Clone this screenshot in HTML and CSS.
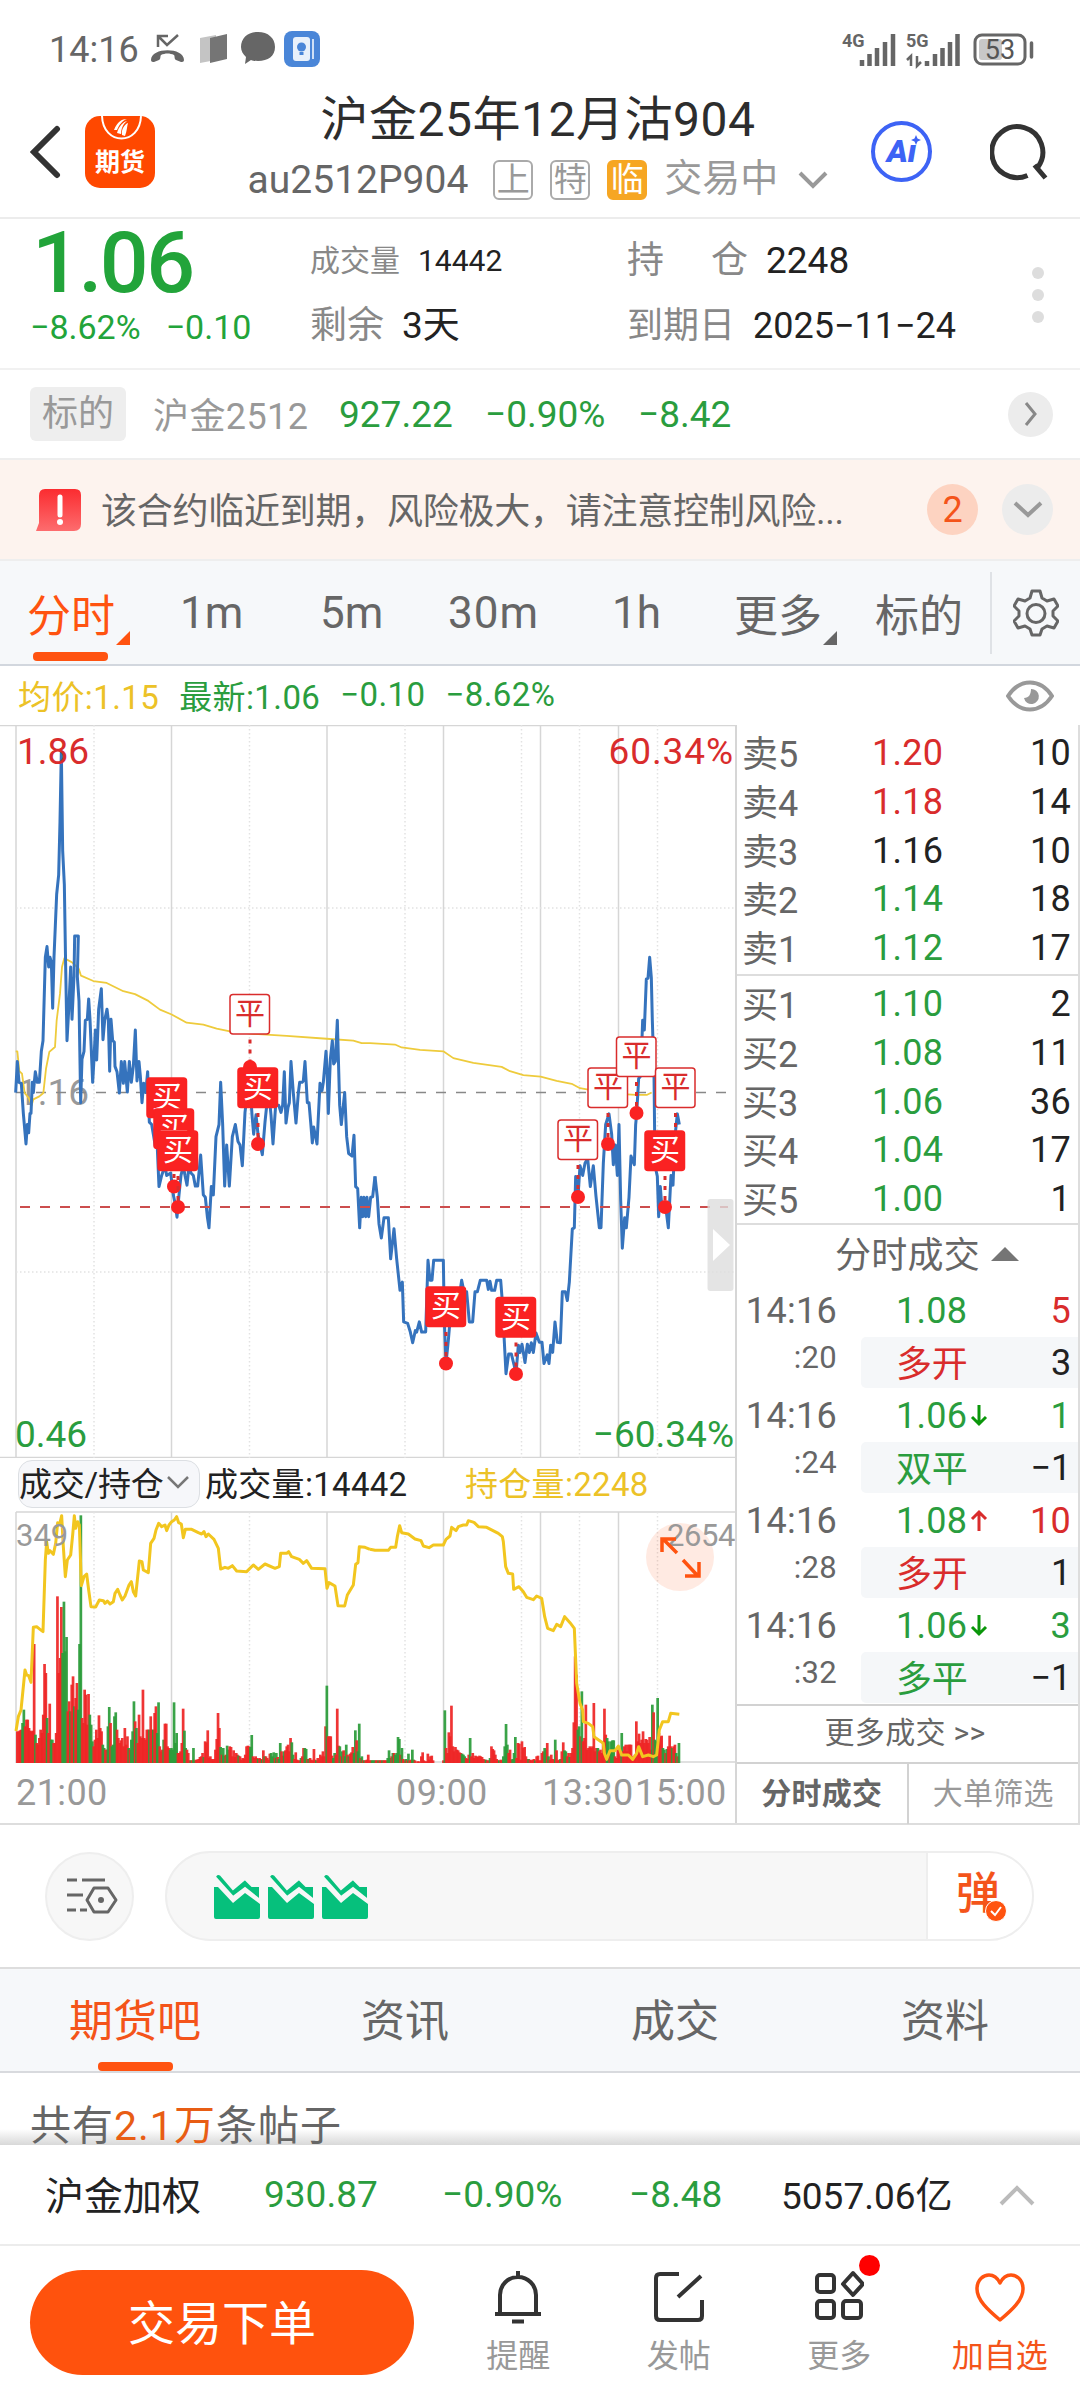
FILE: index.html
```html
<!DOCTYPE html>
<html lang="zh-CN">
<head>
    <meta charset="UTF-8">
    <meta name="viewport" content="width=device-width, initial-scale=1.0">
    <link rel="stylesheet" href="styles.css">
    <title>沪金25年12月沽904</title>
</head>
<body>
    <div class="container">
        <!-- Status bar -->
        <div class="status-bar">
            <span class="clock">14:16</span>
            <svg class="status-icons" width="170" height="40" viewBox="0 0 170 40">
                <path d="M8 17V6h10M8 6l9 9L28 5" fill="none" stroke="#666" stroke-width="2.5"/>
                <path d="M1 30c0-13 33-13 33 0 0 2-2 2-3 2l-5-2c-2-1-1-4-2-5-4-2-9-2-13 0-1 1 0 4-2 5l-5 2c-1 0-3 0-3-2z" fill="#666"/>
                <path d="M50 8l16-3v25l-16 3z" fill="#c4c4c4"/>
                <path d="M60 8l17-4v25l-17 4z" fill="#757575"/>
                <path d="M108 2c10 0 17 6 17 15s-7 14-17 14c-3 0-5 0-7-1l-6 4 1-7c-3-3-5-6-5-10 0-9 7-15 17-15z" fill="#666"/>
                <rect x="134" y="1" width="36" height="36" rx="8" fill="#4a86d8"/>
                <rect x="143" y="7" width="17" height="24" rx="3" fill="#e9f1fb"/>
                <path d="M163 9v20" stroke="#cfe0f6" stroke-width="2"/>
                <circle cx="151.500" cy="17" r="4.500" fill="#4a86d8"/>
                <path d="M149.500 22h4v3h-4z" fill="#4a86d8"/>
            </svg>
            <svg class="status-right" width="192" height="40" viewBox="0 0 192 40">
                <text x="0" y="17" class="net">4G</text>
                <path d="M20 36v-6M27.500 36V24M35 36V18M43 36V12M51 36V4" stroke="#666" stroke-width="4.500"/>
                <text x="64" y="17" class="net">5G</text>
                <path d="M69 36V26l-4 4M75 26v10l4-4" stroke="#666" stroke-width="2.500" fill="none"/>
                <path d="M85 36v-5M93 36V24M100.500 36V18M108 36V12M115.500 36V4" stroke="#666" stroke-width="4.500"/>
                <rect x="133" y="5" width="50" height="29" rx="7" fill="none" stroke="#666" stroke-width="3"/>
                <rect x="137" y="9" width="23" height="21" rx="3" fill="#c8c8c8"/>
                <text x="158" y="29" text-anchor="middle" class="battery">53</text>
                <path d="M189.500 13v14" stroke="#666" stroke-width="3.500" stroke-linecap="round"/>
            </svg>
        </div>

        <!-- Header -->
        <div class="header">
            <svg width="32" height="54" viewBox="0 0 32 54"><path d="M27 4L4 27l23 23" fill="none" stroke="#333" stroke-width="6" stroke-linecap="round"/></svg>
            <div class="logo">
                <svg width="72" height="28" viewBox="0 0 72 28">
                    <path d="M17 0c1 30 38 30 39 0" fill="none" stroke="#fff" stroke-width="2"/>
                    <path d="M29 14c3-8 8-11 13-11-5 2-8 6-10 11zM32 17c2-7 6-11 10-12-4 3-6 8-6 13zM37 19c-1-6 3-11 6-12-1 3-1 8-3 13z" fill="#fff"/>
                </svg>
                <span>期货</span>
            </div>
            <div class="title-box">
                <h1>沪金25年12月沽904</h1>
                <div class="sub-title">
                    <span>au2512P904</span>
                    <i class="tag">上</i><i class="tag">特</i><i class="tag tag-near">临</i>
                    <span class="state">交易中</span>
                    <svg width="30" height="18" viewBox="0 0 30 18"><path d="M2 2l13 13L28 2" fill="none" stroke="#999" stroke-width="4"/></svg>
                </div>
            </div>
            <div class="ai-button">Ai<svg width="10" height="10" viewBox="0 0 10 10"><path d="M5 0l1.500 3.500L10 5 6.500 6.500 5 10 3.500 6.500 0 5l3.500-1.500z" fill="#3d63f5"/></svg></div>
            <svg class="search" width="60" height="60" viewBox="0 0 60 60"><path d="M37.500 53.500A25.500 25.500 0 1 1 48 45M44.500 43l11 13" fill="none" stroke="#333" stroke-width="5"/></svg>
        </div>

        <!-- Quote -->
        <div class="quote">
            <div class="quote-main">
                <div class="price">1.06</div>
                <div class="change"><span>−8.62%</span><span>−0.10</span></div>
            </div>
            <div class="quote-col">
                <div class="small"><label>成交量</label>14442</div>
                <div><label>剩余</label>3天</div>
            </div>
            <div class="quote-col">
                <div class="wide"><label><span>持</span><span>仓</span></label>2248</div>
                <div class="date"><label>到期日</label>2025−11−24</div>
            </div>
            <div class="dots"><i></i><i></i><i></i></div>
        </div>

        <div class="underlying">
            <span class="badge">标的</span>
            <span class="name">沪金2512</span>
            <span class="u-price">927.22</span>
            <span class="u-rate">−0.90%</span>
            <span>−8.42</span>
            <div class="round small-round"><svg width="14" height="26" viewBox="0 0 14 26"><path d="M2 2l9 11-9 11" fill="none" stroke="#888" stroke-width="3"/></svg></div>
        </div>

        <div class="warning">
            <svg width="46" height="44" viewBox="0 0 46 44">
                <defs><linearGradient id="alert" x2="0" y2="1"><stop offset="0" stop-color="#fb2c30"/><stop offset="1" stop-color="#fd6c6e"/></linearGradient></defs>
                <path d="M9 1h30q6 0 6 6v29q0 7-7 7H0l3-8V8q0-7 6-7z" fill="url(#alert)"/>
                <path d="M24 9v18" stroke="#fff" stroke-width="5" stroke-linecap="round"/><circle cx="24" cy="34" r="3" fill="#fff"/>
            </svg>
            <p>该合约临近到期，风险极大，请注意控制风险...</p>
            <div class="round count">2</div>
            <div class="round"><svg width="30" height="18" viewBox="0 0 30 18"><path d="M2 2l13 12L28 2" fill="none" stroke="#999" stroke-width="4"/></svg></div>
        </div>

        <!-- Period tabs -->
        <div class="periods">
            <a class="active has-menu">分时</a>
            <a>1m</a>
            <a>5m</a>
            <a>30m</a>
            <a>1h</a>
            <a class="has-menu">更多</a>
            <a>标的</a>
            <div class="settings">
                <svg width="46" height="48" viewBox="0 0 46 48">
                    <path d="M19 2h8l2 7 5 3 7-2 4 7-5 5v5l5 5-4 7-7-2-5 3-2 6h-8l-2-6-5-3-7 2-4-7 5-5v-5l-5-5 4-7 7 2 5-3z" fill="none" stroke="#666" stroke-width="3" stroke-linejoin="round"/>
                    <circle cx="23" cy="24.500" r="9" fill="none" stroke="#666" stroke-width="3"/>
                </svg>
            </div>
        </div>

        <div class="legend">
            <span class="yellow">均价:1.15</span>
            <span>最新:1.06</span>
            <span>−0.10</span>
            <span>−8.62%</span>
            <svg width="48" height="32" viewBox="0 0 48 32"><path d="M2 16C14-2 34-2 46 16 34 34 14 34 2 16z" fill="none" stroke="#999" stroke-width="4"/><path d="M25 9a7.500 7.500 0 1 1-7 9c5 0 7-4 7-9z" fill="#999"/></svg>
        </div>

        <div class="board">
            <div class="charts">
                <!-- Price chart -->
                <svg class="price-chart" width="735" height="733" viewBox="0 0 735 733">
                    <g class="grid">
                        <path d="M0 .5H735M0 732.500H735M16 0V733M171.500 0V733M327 0V733M443.500 0V733M540.500 0V733M618.500 0V733"/>
                        <path class="dotted" d="M94 0V733M249.500 0V733M405 0V733M521.500 0V733M579.500 0V733M657.500 0V733M16 183H735M16 547H735"/>
                    </g>
                    <text x="17" y="380" class="gray">1.16</text>
                    <path d="M16 367.500H728" class="base-line"/>
                    <g transform="translate(0 -15) scale(.33333 .48485)">
                        <polyline class="avg" points="47,704 52,704 58,745 66,750 74,790 86,800 95,815 100,803 118,797 130,790 138,740 148,705 165,695 170,640 180,585 186,530 193,512 215,520 236,533 243,548 280,559 320,563 370,580 405,586 445,600 480,618 515,628 560,645 610,649 650,657 690,663 760,668 860,672 980,678 1060,682 1085,687 1110,687 1185,690 1205,696 1260,701 1330,704 1360,718 1420,728 1505,736 1530,745 1570,753 1622,756 1670,765 1715,771 1740,780 1765,783 1810,790 1910,794 1940,794 1955,789"/>
                        <!-- night session -->
                        <polyline class="line" points="47,789 52,725 57,768 64,770 70,832 78,895 82,855 86,872 90,832 93,832 97,768 100,789 106,746 112,768 118,768 124,704 129,682 136,510 141,488 146,530 150,510 154,520 158,615 162,510 166,445 170,380 176,340 180,230 184,85 188,290 193,360 197,530 201,682 206,620 212,530 216,638 222,550 224,466 235,466 232,550 237,600 242,810 246,720 252,704 256,640 262,638 266,596 270,638 278,768 282,720 286,660 290,722 296,617 304,575 309,680 314,640 321,617 325,640 329,745 333,638 338,682 343,685 345,735 351,746 358,790 364,725 370,770 374,725 382,788 388,725 394,768 400,735 406,660 411,765 417,725 421,755 426,810 431,770 437,789 443,746 448,850 455,855 460,875 466,900 472,905 477,983 485,960 495,940 500,960 512,955 520,1000 526,1020 531,1046 537,1000 543,960 550,940 555,960 561,980 567,940 573,955 580,960 586,982 593,982 602,918 610,1000 616,1005 622,1045 627,1068 634,983 640,1000 648,880 657,855 662,768 668,855 674,982 680,897 688,982 697,880 706,855 714,890 720,897 727,940 735,830 742,790 750,770 756,835 761,875 768,835 774,875 780,895 787,917 795,850 801,810 808,800 813,835 819,895 827,815 836,815 843,830 848,815 853,746 858,852 864,820 868,810 873,725 880,790 888,852 895,790 899,768 906,768 910,765 915,725 922,810 927,810 932,850 937,893 941,860 951,895 960,770 966,785 970,768 978,704 981,740 985,832 991,720 997,682 1001,730 1006,725 1012,640 1019,815 1024,855 1034,789 1040,880 1046,915 1056,920 1062,877 1067,983 1073,987 1079,1068 1084,1005 1088,1045 1092,1005 1097,1045 1101,1005 1106,1045 1112,1005 1118,1004 1125,962"/>
                        <!-- day session -->
                        <polyline class="line" transform="translate(1110 0)" points="15,962 22,1005 27,1060 34,1089 42,1047 55,1047 62,1132 72,1070 80,1132 90,1197 97,1180 101,1262 113,1265 121,1283 128,1305 136,1280 140,1283 148,1262 155,1283 167,1283 170,1220 174,1135 180,1176 186,1176 191,1135 220,1135 223,1260 228,1348 235,1300 240,1260 250,1220 260,1215 270,1200 275,1176 282,1200 290,1200 298,1262 308,1262 315,1200 322,1200 331,1176 350,1176 355,1195 360,1178 365,1197 374,1197 380,1176 392,1176 397,1220 402,1290 408,1369 416,1328 424,1328 432,1350 438,1370 445,1310 450,1325 456,1308 465,1346 472,1308 478,1325 484,1305 490,1325 498,1285 508,1304 516,1304 522,1348 532,1330 537,1348 542,1310 548,1325 555,1262 562,1304 571,1305 577,1200 586,1200 592,1218 598,1180 607,1070 613,1068 617,962 624,1005 630,940 638,960 645,935 653,925 661,983 670,940 678,1003 688,1068 693,1068 700,935 707,855 717,833 725,875 730,938 736,897 742,960 747,855 752,1010 757,1110 764,1047 769,1068 777,1005 783,920 793,938 797,855 800,833 806,760 812,755 818,640 823,660 829,555 834,553 839,510 844,552 847,640 852,750 855,940 862,962 866,1045 871,983 876,1030 884,1026 888,1030 895,1068 903,960 909,980 915,880 922,833 928,855"/>
                    </g>
                    <path d="M20 482H728" class="cost-line"/>
                    <g id="marks"></g>
                    <text x="17" y="39" class="red">1.86</text>
                    <text x="734" y="39" class="red percent" text-anchor="end">60.34%</text>
                    <text x="15" y="722" class="green">0.46</text>
                    <text x="734" y="722" class="green" text-anchor="end">−60.34%</text>
                    <rect x="707.500" y="474" width="26" height="92" rx="3" fill="#ddd" fill-opacity=".8"/>
                    <path d="M713 504v32l17-16z" fill="#fff"/>
                </svg>

                <div class="volume-head">
                    <span class="select">成交/持仓<svg width="24" height="16" viewBox="0 0 24 16"><path d="M2 3l10 10L22 3" fill="none" stroke="#777" stroke-width="2.500"/></svg></span>
                    <span class="volume">成交量:14442</span>
                    <span class="hold yellow">持仓量:2248</span>
                </div>

                <!-- Volume chart -->
                <svg class="volume-chart" width="735" height="253" viewBox="0 0 735 253">
                    <g class="grid">
                        <path d="M16 2H735M16 252H735M16 2V253M171.500 2V253M327 2V253M443.500 2V253M540.500 2V253M618.500 2V253"/>
                        <path class="dotted" d="M94 2V253M249.500 2V253M405 2V253M521.500 2V253M579.500 2V253M657.500 2V253"/>
                    </g>
                    <g id="bars"></g>
                    <g transform="translate(10 0) scale(.33333)">
                        <polyline class="open-interest" points="18,663 25,620 33,600 45,480 50,495 56,497 63,517 70,352 80,350 90,358 99,365 106,150 110,95 115,130 120,122 130,133 137,100 143,38 149,42 155,17 160,110 166,200 172,150 182,135 188,75 193,17 197,55 203,35 208,45 214,227 222,200 230,192 236,240 243,290 257,291 268,270 280,272 285,280 292,273 300,282 310,275 315,250 323,238 330,255 337,270 345,258 357,225 364,215 370,245 377,258 388,153 396,155 400,180 415,188 422,100 432,85 438,60 446,40 455,50 465,45 470,62 477,45 485,35 493,30 500,20 506,38 514,42 520,83 526,58 545,58 565,68 575,72 582,65 588,80 595,72 612,88 625,115 632,177 645,172 655,175 667,167 680,183 710,185 730,165 745,178 765,162 795,175 808,170 812,130 830,130 836,125 845,140 868,148 880,160 890,152 905,175 945,176 951,235 957,218 975,228 984,287 1004,288 1012,255 1030,225 1037,163 1044,158 1048,110 1065,112 1080,118"/>
                        <polyline class="open-interest" transform="translate(1080 0)" points="0,118 15,121 55,121 62,112 77,112 82,80 89,47 95,68 115,72 135,87 153,92 160,108 177,113 190,105 220,105 228,88 240,78 245,52 258,62 265,50 280,45 290,45 295,32 312,37 325,50 350,52 385,70 397,80 400,95 407,170 415,190 428,192 431,238 447,230 460,245 470,262 490,269 500,258 515,265 524,320 533,355 550,362 560,343 572,350 584,320 600,338 613,355 620,520 630,580 638,600 640,635 655,640 668,650 672,680 700,700 703,730 710,748 720,722 735,722 745,708 755,735 775,735 788,748 800,730 806,710 818,740 835,735 850,740 860,735 868,660 878,635 895,635 902,610 928,613"/>
                    </g>
                    <circle cx="680" cy="47" r="34" fill="#ff5310" fill-opacity=".12"/>
                    <text x="16" y="36" class="gray axis">349</text>
                    <text x="735" y="36" class="gray axis wide-axis" text-anchor="end">2654</text>
                    <path d="M677 43l-14-14M662 42V29h14M683 50l14 15M699 52v14h-14" fill="none" stroke="#ff5310" stroke-width="3.500"/>
                </svg>

                <div class="times"><span>21:00</span><span>09:00</span><span>13:30</span><span>15:00</span></div>
            </div>

            <!-- Order book -->
            <div class="book">
                <div class="levels">
                    <div><label>卖5</label><b class="red">1.20</b><em>10</em></div>
                    <div><label>卖4</label><b class="red">1.18</b><em>14</em></div>
                    <div><label>卖3</label><b>1.16</b><em>10</em></div>
                    <div><label>卖2</label><b class="green">1.14</b><em>18</em></div>
                    <div><label>卖1</label><b class="green">1.12</b><em>17</em></div>
                </div>
                <div class="levels">
                    <div><label>买1</label><b class="green">1.10</b><em>2</em></div>
                    <div><label>买2</label><b class="green">1.08</b><em>11</em></div>
                    <div><label>买3</label><b class="green">1.06</b><em>36</em></div>
                    <div><label>买4</label><b class="green">1.04</b><em>17</em></div>
                    <div><label>买5</label><b class="green">1.00</b><em>1</em></div>
                </div>
                <div class="trades-title">分时成交<i></i></div>
                <div class="trade">
                    <div class="time">14:16<small>:20</small></div>
                    <div class="deal"><p class="green">1.08<em class="red">5</em></p><p class="kind red">多开<em>3</em></p></div>
                </div>
                <div class="trade">
                    <div class="time">14:16<small>:24</small></div>
                    <div class="deal"><p class="green">1.06<svg width="18" height="24" viewBox="0 0 18 24"><path d="M9 1v19M2 13l7 7 7-7" fill="none" stroke="#0a960a" stroke-width="3"/></svg><em class="green">1</em></p><p class="kind green">双平<em>−1</em></p></div>
                </div>
                <div class="trade">
                    <div class="time">14:16<small>:28</small></div>
                    <div class="deal"><p class="green">1.08<svg width="18" height="24" viewBox="0 0 18 24"><path d="M9 22V3M2 10l7-7 7 7" fill="none" stroke="#d92c2c" stroke-width="3"/></svg><em class="red">10</em></p><p class="kind red">多开<em>1</em></p></div>
                </div>
                <div class="trade">
                    <div class="time">14:16<small>:32</small></div>
                    <div class="deal"><p class="green">1.06<svg width="18" height="24" viewBox="0 0 18 24"><path d="M9 1v19M2 13l7 7 7-7" fill="none" stroke="#0a960a" stroke-width="3"/></svg><em class="green">3</em></p><p class="kind green">多平<em>−1</em></p></div>
                </div>
                <div class="more-trades">更多成交 &gt;&gt;</div>
                <div class="book-tabs"><span class="active">分时成交</span><span>大单筛选</span></div>
            </div>
        </div>

        <!-- Comment bar -->
        <div class="comment-bar">
            <div class="filter">
                <svg width="52" height="40" viewBox="0 0 52 40">
                    <path d="M1 4h10M16 4h23M1 19h16M1 34h9M14 34h7" stroke="#666" stroke-width="3"/>
                    <path d="M28 12h14l8 12-8 12H28l-7-12z" fill="none" stroke="#666" stroke-width="3" stroke-linejoin="round"/><circle cx="35" cy="24" r="3" fill="#666"/>
                </svg>
            </div>
            <div class="input">
                <svg class="fall" width="46" height="46" viewBox="0 0 46 46"><path d="M0 44V14h4l15 16 12-10 15 11v13q0 2-2 2H2q-2 0-2-2z"/><path d="M1 4Q3-1 7 2l12 14L31 6l7 7 8 0v14L31 15 19 24z"/></svg>
                <svg class="fall" width="46" height="46" viewBox="0 0 46 46"><path d="M0 44V14h4l15 16 12-10 15 11v13q0 2-2 2H2q-2 0-2-2z"/><path d="M1 4Q3-1 7 2l12 14L31 6l7 7 8 0v14L31 15 19 24z"/></svg>
                <svg class="fall" width="46" height="46" viewBox="0 0 46 46"><path d="M0 44V14h4l15 16 12-10 15 11v13q0 2-2 2H2q-2 0-2-2z"/><path d="M1 4Q3-1 7 2l12 14L31 6l7 7 8 0v14L31 15 19 24z"/></svg>
                <div class="danmu">弹<svg width="22" height="22" viewBox="0 0 22 22"><circle cx="11" cy="11" r="10.500" fill="#ff5310" stroke="#fff"/><path d="M6 11l4 4 6-8" fill="none" stroke="#fff" stroke-width="2"/></svg></div>
            </div>
        </div>

        <div class="page-tabs">
            <a class="active">期货吧</a><a>资讯</a><a>成交</a><a>资料</a>
        </div>

        <div class="posts">共有<span>2.1万</span>条帖子</div>

        <!-- Index ticker -->
        <div class="ticker">
            <span class="t-name">沪金加权</span>
            <span class="t-price">930.87</span>
            <span class="t-rate">−0.90%</span>
            <span class="t-diff">−8.48</span>
            <span class="t-total">5057.06亿</span>
            <svg width="36" height="22" viewBox="0 0 36 22"><path d="M2 20L18 4l16 16" fill="none" stroke="#bbb" stroke-width="4"/></svg>
        </div>

        <div class="bottom-bar">
            <button>交易下单</button>
            <a>
                <svg width="50" height="54" viewBox="0 0 50 54"><path d="M25 1v6M7 44V25a18 18 0 0 1 36 0v19M2 44h46M19 51.500h12" fill="none" stroke="#333" stroke-width="4"/></svg>
                提醒
            </a>
            <a>
                <svg width="50" height="54" viewBox="0 0 50 54"><path d="M25 4H6q-4 0-4 4v38q0 4 4 4h38q4 0 4-4V30M24 27L47 6" fill="none" stroke="#333" stroke-width="4"/></svg>
                发帖
            </a>
            <a>
                <svg width="50" height="54" viewBox="0 0 50 54"><g fill="none" stroke="#333" stroke-width="4"><rect x="3" y="5" width="17" height="17" rx="3"/><rect x="3" y="31" width="17" height="17" rx="3"/><rect x="29" y="31" width="18" height="17" rx="3"/><path d="M39 3l10 11-10 11-10-11z" stroke-linejoin="round"/></g></svg>
                更多
                <i class="dot"></i>
            </a>
            <a class="favorite">
                <svg width="54" height="54" viewBox="0 0 54 54"><path d="M27 50C15 40 4 30 4 19 4 9 11 5 16 5c6 0 9 4 11 8 2-4 5-8 11-8 5 0 12 4 12 14 0 11-11 21-23 31z" fill="none" stroke="#ff5310" stroke-width="3.500" stroke-linejoin="round"/></svg>
                加自选
            </a>
        </div>
    </div>
    <script src="script.js"></script>
</body>
</html>
```

FILE: styles.css
```css
body {
    font-family: Roboto, "Noto Sans CJK SC", sans-serif;
    margin: 0;
    padding: 0;
    background: #fff;
    color: #222;
    font-size: 36px;
}

* {
    box-sizing: border-box;
}

i, em {
    font-style: normal;
}

p, h1 {
    margin: 0;
    font-weight: normal;
}

b {
    font-weight: normal;
}

.container {
    width: 1080px;
    height: 2400px;
    overflow: hidden;
    display: flex;
    flex-direction: column;
}

.container > div {
    flex-shrink: 0;
}

.red { color: #d92c2c; fill: #d92c2c; }
.green { color: #2a9d3e; fill: #2a9d3e; }
.gray { color: #999; fill: #999; }
.yellow { color: #ecc227; }

/* status bar */
.status-bar {
    height: 100px;
    display: flex;
    align-items: center;
    padding: 0 46px 0 49px;
}

.clock {
    width: 101px;
    font-size: 36px;
    color: #666;
}

.status-right {
    margin-left: auto;
}

.net {
    font-size: 18px;
    font-weight: bold;
    fill: #666;
}

.battery {
    font-size: 27px;
    fill: #555;
}

/* header */
.header {
    height: 119px;
    border-bottom: 2px solid #ececec;
    display: flex;
    align-items: center;
    padding: 0 30px 14px;
}

.header > svg {
    flex-shrink: 0;
}

.logo {
    width: 72px;
    height: 72px;
    margin-left: 23px;
    border-radius: 15px;
    background: #ff4800;
    color: #fff;
    font-size: 25px;
    line-height: 30px;
    font-weight: bold;
    text-align: center;
    overflow: hidden;
}

.logo svg {
    display: block;
}

.logo span {
    display: block;
    margin-top: 4px;
}

.title-box {
    width: 600px;
    margin: 0 33px 0 83px;
    text-align: center;
    flex-shrink: 0;
}

.title-box h1 {
    font-size: 48px;
    line-height: 60px;
    letter-spacing: .5px;
    color: #2d2d2d;
    margin-top: -4px;
}

.sub-title {
    display: flex;
    align-items: center;
    justify-content: center;
    font-size: 39px;
    line-height: 60px;
    color: #666;
}

.tag {
    width: 40px;
    height: 40px;
    margin-left: 16px;
    border: 2px solid #aaa;
    border-radius: 6px;
    font-size: 33px;
    line-height: 35px;
    color: #999;
}

.tag + .tag {
    margin-left: 17px;
}

.sub-title span + .tag {
    margin-left: 25px;
}

.tag-near {
    background: #f6a623;
    border-color: #f6a623;
    color: #fff;
}

.state {
    margin: 0 20px 0 17px;
    font-size: 38px;
    line-height: 54px;
    padding-bottom: 4px;
    color: #999;
}

.ai-button {
    width: 61px;
    height: 61px;
    flex-shrink: 0;
    border: 4px solid #3d63f5;
    border-radius: 50%;
    color: #3d63f5;
    font-size: 32px;
    line-height: 53px;
    font-weight: 900;
    font-style: italic;
    text-align: center;
    position: relative;
}

.ai-button svg {
    position: absolute;
    right: 7px;
    top: 10px;
    background: #fff;
}

.search {
    margin-left: 58px;
}

/* quote */
.quote {
    height: 151px;
    border-bottom: 2px solid #f1f1f1;
    display: flex;
    padding-left: 30px;
}

.quote-main {
    width: 280px;
    color: #22a43a;
}

.price {
    font-size: 86px;
    line-height: 88px;
    font-weight: 500;
    padding-left: 2px;
    letter-spacing: -2.5px;
    height: 84px;
}

.change {
    display: flex;
    gap: 25px;
    font-size: 34px;
    line-height: 48px;
}

.quote-col {
    width: 317px;
    display: flex;
    flex-direction: column;
    gap: 17px;
    padding-top: 18px;
    white-space: nowrap;
}

.quote-col div {
    display: flex;
    align-items: center;
    font-size: 37px;
    line-height: 48px;
}

.quote-col label {
    color: #888;
    margin-right: 18px;
}

.quote-col .small {
    font-size: 30px;
}

.wide label {
    width: 121px;
    display: flex;
    justify-content: space-between;
}

.quote-col .date {
    font-size: 36px;
}

.dots {
    margin: 48px 0 0 88px;
    display: flex;
    flex-direction: column;
    gap: 10px;
}

.dots i {
    width: 12px;
    height: 12px;
    border-radius: 50%;
    background: #ddd;
}

.underlying {
    height: 90px;
    border-bottom: 2px solid #eee;
    display: flex;
    align-items: center;
    padding: 0 27px 0 30px;
    font-size: 37px;
    color: #2a9d3e;
}

.badge {
    width: 96px;
    height: 54px;
    line-height: 54px;
    border-radius: 6px;
    background: #eee;
    color: #999;
    font-size: 36px;
    text-align: center;
}

.name {
    width: 186px;
    margin: -2px 0 0 27px;
    font-size: 36px;
    letter-spacing: .4px;
    color: #999;
}

.u-price { width: 146px; }
.u-rate { width: 153px; }

.round {
    width: 51px;
    height: 51px;
    border-radius: 50%;
    background: #ececec;
    display: flex;
    align-items: center;
    justify-content: center;
}

.small-round {
    width: 45px;
    height: 45px;
    margin-left: auto;
}

.warning {
    height: 101px;
    background: #fdf3ee;
    border-bottom: 2px solid #eee;
    display: flex;
    align-items: center;
    padding: 0 27px 0 36px;
    color: #666;
}

.warning p {
    flex: 1;
    margin: -3px 0 0 19px;
    letter-spacing: -.25px;
    white-space: nowrap;
}

.count {
    background: #fdd3c1;
    color: #f4541a;
    margin-right: 24px;
}

/* period tabs */
.periods {
    height: 105px;
    background: #f6f8fa;
    border-bottom: 2px solid #d2d7de;
    display: flex;
    align-items: center;
    padding-left: 27px;
    font-size: 44px;
    color: #666;
}

.periods a {
    position: relative;
}

.periods a:nth-child(1) { width: 153px; }
.periods a:nth-child(2) { width: 140px; }
.periods a:nth-child(3) { width: 128px; }
.periods a:nth-child(4) { width: 164px; letter-spacing: 1px; }
.periods a:nth-child(5) { width: 122px; }
.periods a:nth-child(6) { width: 141px; }
.periods a:nth-child(7) { width: 115px; }

.has-menu::after {
    content: "";
    position: absolute;
    left: 89px;
    bottom: 0;
    border-left: 14px solid transparent;
    border-bottom: 14px solid currentColor;
}

.periods .active {
    color: #ff5310;
}

.periods .active::before,
.page-tabs .active::before {
    content: "";
    position: absolute;
    left: 6px;
    bottom: -16px;
    width: 75px;
    height: 9px;
    border-radius: 4px;
    background: #ff5310;
}

.settings {
    height: 82px;
    flex: 1;
    border-left: 2px solid #dfe2e6;
    display: flex;
    align-items: center;
    justify-content: center;
}

.legend {
    height: 59px;
    display: flex;
    align-items: center;
    gap: 20px;
    padding: 0 26px 0 18px;
    font-size: 33px;
    color: #2a9d3e;
    letter-spacing: .4px;
}

.legend span {
    margin-top: -2px;
}

.legend svg {
    margin-left: auto;
}

/* chart and order book */
.board {
    height: 1100px;
    display: flex;
    border-bottom: 2px solid #ddd;
}

.charts {
    width: 735px;
}

.charts > svg {
    display: block;
}

.price-chart text {
    font-size: 37px;
}

.price-chart .percent {
    letter-spacing: .9px;
}

.grid path {
    fill: none;
    stroke: #d6d6d6;
    stroke-width: 1.5;
}

.grid .dotted {
    stroke: #e2e2e2;
    stroke-dasharray: 1.5 2.5;
}

.base-line {
    stroke: #888;
    stroke-width: 1.5;
    stroke-dasharray: 10 10;
}

.cost-line {
    stroke: #cc4d4d;
    stroke-width: 2;
    stroke-dasharray: 10 10;
}

.line, .avg, .open-interest {
    fill: none;
    vector-effect: non-scaling-stroke;
    stroke-width: 3;
    stroke-linejoin: round;
}

.line { stroke: #3573bd; }
.avg { stroke: #eecb3c; stroke-width: 1.8; }
.open-interest { stroke: #f2c61f; }

.mark rect {
    stroke: #d92c2c;
    stroke-width: 1.5;
    fill: #fff;
}

.price-chart .mark text {
    font-size: 30px;
    fill: #d92c2c;
    text-anchor: middle;
}

.mark.buy rect {
    fill: #fa2222;
    stroke: #fa2222;
}

.price-chart .mark.buy text {
    fill: #fff;
}

.mark path {
    stroke: #d92c2c;
    stroke-width: 3;
    stroke-dasharray: 4 6;
}

.mark circle {
    fill: #fa2222;
}

.volume-head {
    height: 52px;
    display: flex;
    align-items: center;
    padding-left: 18px;
    font-size: 33px;
}

.select {
    width: 182px;
    height: 48px;
    display: flex;
    align-items: center;
    gap: 2px;
    padding-bottom: 4px;
    border: 1px solid #dcdfe3;
    border-radius: 14px;
    background: #f6f7fa;
    white-space: nowrap;
    letter-spacing: -.2px;
}

.volume {
    width: 260px;
    margin: -5px 0 0 5px;
    letter-spacing: .3px;
}

.hold {
    margin-top: -5px;
    letter-spacing: .3px;
}

.price-chart + * + svg .axis {
    font-size: 31px;
}

.wide-axis {
    letter-spacing: -.4px;
}

.times {
    height: 60px;
    display: flex;
    align-items: center;
    padding-left: 16px;
    color: #999;
    letter-spacing: .4px;
}

.times span:nth-child(1) { width: 380px; }
.times span:nth-child(2) { width: 146px; }
.times span:nth-child(3) { width: 93px; }

.book {
    width: 345px;
    border-left: 2px solid #d6d6d6;
    border-right: 2px solid #ddd;
    letter-spacing: .3px;
}

.levels {
    height: 251px;
    padding: 4px 7px 0 5px;
    border-bottom: 2px solid #ddd;
}

.levels + .levels {
    height: 249px;
}

.levels div {
    height: 48.7px;
    display: flex;
    align-items: center;
}

.levels label {
    width: 130px;
    margin-top: -4px;
    letter-spacing: 0;
    color: #666;
}

.levels em, .deal em {
    margin-left: auto;
    color: #222;
}

.deal em.red { color: #d92c2c; }
.deal em.green { color: #2a9d3e; }

.trades-title {
    height: 59px;
    display: flex;
    align-items: center;
    justify-content: center;
    padding: 0 0 6px 39px;
    color: #666;
}

.trades-title i {
    margin: 4px 0 0 11px;
    border: 14px solid transparent;
    border-top: 0;
    border-bottom: 14px solid #757575;
}

.trade {
    height: 105px;
    display: flex;
}

.time {
    width: 124px;
    padding: 2px 24px 0 0;
    color: #666;
    text-align: right;
    line-height: 50px;
}

.time small {
    display: block;
    font-size: 31px;
    line-height: 44px;
}

.deal {
    flex: 1;
}

.deal p {
    height: 53px;
    display: flex;
    align-items: center;
    padding: 0 7px 0 35px;
}

.deal .kind {
    height: 51px;
    padding-bottom: 4px;
    border-radius: 5px 0 0 5px;
    background: #f5f7f9;
    letter-spacing: -.2px;
}

.kind em {
    padding-top: 4px;
}

.deal svg {
    margin-left: 3px;
}

.more-trades {
    height: 60px;
    border: solid #d2d2d2;
    border-width: 2px 0;
    padding-right: 5px;
    line-height: 54px;
    font-size: 30px;
    color: #666;
    text-align: center;
}

.book-tabs {
    display: flex;
    height: 60px;
    font-size: 30px;
    line-height: 60px;
    text-align: center;
    color: #999;
}

.book-tabs span {
    flex: 1;
}

.book-tabs .active {
    border-right: 2px solid #d2d2d2;
    font-weight: bold;
    color: #666;
}

/* comment bar */
.comment-bar {
    height: 142px;
    display: flex;
    align-items: center;
    padding: 0 46px 0 45px;
}

.filter {
    width: 89px;
    height: 89px;
    border: 2px solid #eee;
    border-radius: 50%;
    background: #f7f7f7;
    display: flex;
    align-items: center;
    justify-content: center;
    padding-left: 4px;
}

.input {
    flex: 1;
    height: 90px;
    margin-left: 31px;
    padding-left: 47px;
    border: 2px solid #eee;
    border-radius: 45px;
    background: #f7f7f7;
    display: flex;
    align-items: center;
    gap: 8px;
    overflow: hidden;
}

.fall {
    fill: #06c07c;
}

.fall path:last-child {
    stroke: #f7f7f7;
    stroke-width: 2;
}

.danmu {
    width: 106px;
    height: 86px;
    margin-left: auto;
    padding-left: 28px;
    border-left: 2px solid #eee;
    background: #fff;
    color: #f4541a;
    font-size: 44px;
    font-weight: 500;
    line-height: 82px;
    position: relative;
}

.danmu svg {
    position: absolute;
    left: 57px;
    top: 47px;
}

.page-tabs {
    height: 106px;
    border-top: 2px solid #ddd;
    border-bottom: 2px solid #d8dade;
    background: #f6f8fa;
    display: flex;
    font-size: 44px;
    line-height: 107px;
    color: #666;
    text-align: center;
}

.page-tabs a {
    flex: 1;
    height: 102px;
    position: relative;
}

.page-tabs .active {
    color: #f4541a;
}

.page-tabs .active::before {
    left: 98px;
    bottom: 0;
}

.posts {
    height: 72px;
    padding: 23px 0 0 30px;
    overflow: hidden;
    font-size: 41px;
    line-height: 60px;
    letter-spacing: 1px;
    color: #666;
    background: linear-gradient(#fff 56px, #d8d8d8);
}

.posts span {
    color: #e85d14;
}

.ticker {
    height: 101px;
    border-bottom: 2px solid #ececec;
    display: flex;
    align-items: center;
    padding-left: 45px;
    font-size: 37px;
    color: #2a9d3e;
}

.t-name, .ticker .t-total {
    margin-top: -3px;
    color: #222;
}

.t-name { width: 219px; font-size: 39px; }
.t-price { width: 178px; }
.t-rate { width: 187px; }
.t-diff { width: 152px; }
.t-total { width: 218px; }

.bottom-bar {
    height: 154px;
    display: flex;
    padding: 24px 0 0 30px;
    font-size: 32px;
    color: #999;
}

.bottom-bar button {
    width: 384px;
    height: 105px;
    margin-right: 24px;
    border: none;
    border-radius: 53px;
    background: #ff520d;
    color: #fff;
    font-family: inherit;
    font-size: 47px;
    padding-bottom: 7px;
}

.bottom-bar a {
    width: 160.5px;
    position: relative;
    display: flex;
    flex-direction: column;
    align-items: center;
    line-height: 52px;
    gap: 6px;
}

.bottom-bar .favorite {
    color: #f4541a;
}

.dot {
    position: absolute;
    left: 100px;
    top: -15px;
    width: 21px;
    height: 21px;
    border-radius: 50%;
    background: #f00;
}
```

FILE: script.js
```js
const NS = 'http://www.w3.org/2000/svg';

function add(parent, tag, attrs, text) {
    const el = document.createElementNS(NS, tag);
    for (const key in attrs) el.setAttribute(key, attrs[key]);
    if (text) el.textContent = text;
    parent.appendChild(el);
    return el;
}

// trade marks: type, left, top, dot y
const marks = [
    ['平', 230, 269.5, 342], ['买', 238, 343, 419],
    ['买', 147, 353, 0], ['买', 154, 384, 461.5], ['买', 158, 406, 482],
    ['平', 558, 395, 472], ['平', 588, 343, 419], ['平', 616.5, 312, 388],
    ['平', 655.5, 343, 0], ['买', 645, 406, 482],
    ['买', 426, 562, 638.5], ['买', 496, 572.5, 649]
];

const marksBox = document.getElementById('marks');
marks.forEach(([type, x, y, dot]) => {
    const g = add(marksBox, 'g', { class: type === '买' ? 'mark buy' : 'mark' });
    const cx = x + 20;
    add(g, 'path', { d: `M${cx} ${y + 45}V${dot || y + 65}` });
    if (dot) add(g, 'circle', { cx: cx, cy: dot, r: 7 });
    add(g, 'rect', { x: x, y: y, width: 39.5, height: 39.5, rx: 3 });
    add(g, 'text', { x: cx, y: y + 29 }, type);
});

// volume per minute, negative = green bar
const volumes = [
    95, 95, 98, 100, -120, -160, 110, 130, 130, 105, 97, 95, 97, 357, -85, 60, 55, 75, 100, 90,
    145, 297, 270, -135, 90, 178, -70, -70, 60, 60, 90, 500, 270, 315, 468, -330, -484, -335, -378, 155,
    185, -155, 235, 260, -170, 195, 240, -160, -357, -743, 135, 120, 220, 205, 115, 207, -145, -115, -65, 50,
    70, 100, 75, 143, 105, 95, -55, -45, 40, 40, -110, -168, 120, -50, -55, -140, -152, 100, 75, 60,
    68, 75, 50, 105, 55, 80, -45, 40, -70, -95, -185, 125, -105, 60, 145, 80, 75, 220, 75, 70,
    100, 100, -100, 140, 100, -100, 150, 170, -90, -182, 50, 35, 40, -70, 118, 118, 50, 45, -40, -45,
    -40, -182, -60, -90, 30, 30, 35, 60, 163, -97, -45, 40, 30, 8, -8, 8, -45, -8, 10, 10,
    12, 18, 20, 30, -18, 65, 62, 98, 15, 20, 12, 8, 12, 40, 72, 150, 105, -48, 25, -45,
    -22, 25, -52, -40, 50, 48, 20, 38, 18, 30, 25, -22, 20, 10, 15, 12, 25, 50, 52, 50,
    -48, -84, 20, 15, 20, 15, -12, 15, 12, -10, 38, -20, 20, 15, 10, 28, -30, -20, -32, 15,
    -30, 18, -12, -60, 35, 22, -35, 38, 50, 55, 35, 75, -62, -25, 12, 32, 10, 8, 8, -15,
    20, 45, -45, -42, 12, -12, 15, 10, 8, 42, 10, -8, 15, 10, 25, 20, 35, 20, 110, -232,
    80, 80, 80, 22, -15, -30, 25, 163, 52, -50, 20, -35, 38, -20, -55, 25, -20, 28, 32, 48,
    -30, -98, 68, -35, -118, 15, -20, 8, -8, 8, 10, 25, 8, 8, -8, -8, -8, 8, 8, -8,
    8, 8, -8, 8, 8, 8, -15, -38, -15, 20, -30, 30, -25, -30, -78, -72, 25, -45, 12, 8,
    -12, 8, -28, 8, 10, -40, -10, 8, 0, 5, 5, 0, 20, 32, 8, 5, 5, 28, 10, 20,
    22, 8, 0, 0, 0, 0, 0, 0, 0, 8, -158, 45, 30, 92, 80, 172, 50, 35, 48, 40,
    38, 32, 30, -28, -25, -20, 15, 12, 25, -75, 20, 30, 15, 22, 20, 18, 22, 20, 18, 12,
    10, -10, 8, 8, -15, 50, 42, 38, 25, 12, 8, -8, 10, 8, -20, -50, -117, -55, 30, 40,
    10, -12, -30, -78, 15, 60, 58, 10, 65, 45, 48, 20, 12, -12, 10, 8, 10, 12, -8, 20,
    22, 8, 8, 30, 35, -45, -40, 60, -20, 10, 25, 12, 10, -70, 38, 8, 10, -12, 35, 62,
    -38, -35, 20, 30, -18, 30, 45, 122, 320, 265, -100, -110, 80, -215, 65, 75, 175, 40, 45, 50,
    45, 50, 180, 35, 45, -45, 35, 40, 30, 65, 163, 85, -75, -65, 30, -65, -68, -68, 20, 15,
    40, 45, 20, -90, 35, 50, 55, 35, 55, 55, 55, 20, 15, 25, 125, 65, 88, 60, 70, 95,
    60, 72, 70, 60, 78, 40, -175, 152, -70, -65, -195, 90, 80, 82, -45, -40, 30, -42, 50, 82,
    50, -45, 50, 55, -30, 20, -60
];

// the day session starts at 09:00 and is spaced a little wider
const dayStart = 330;

const barsBox = document.getElementById('bars');
volumes.forEach((v, i) => {
    const h = Math.abs(v) / 3;
    const x = i < dayStart ? 16 + i * 1.295 : 443.5 + (i - dayStart) * 1.33;
    add(barsBox, 'rect', {
        x: x.toFixed(1), y: 253 - h, width: 2.7, height: h,
        fill: v < 0 ? '#2b9c3a' : '#ee2626', 'fill-opacity': .93
    });
});
```
